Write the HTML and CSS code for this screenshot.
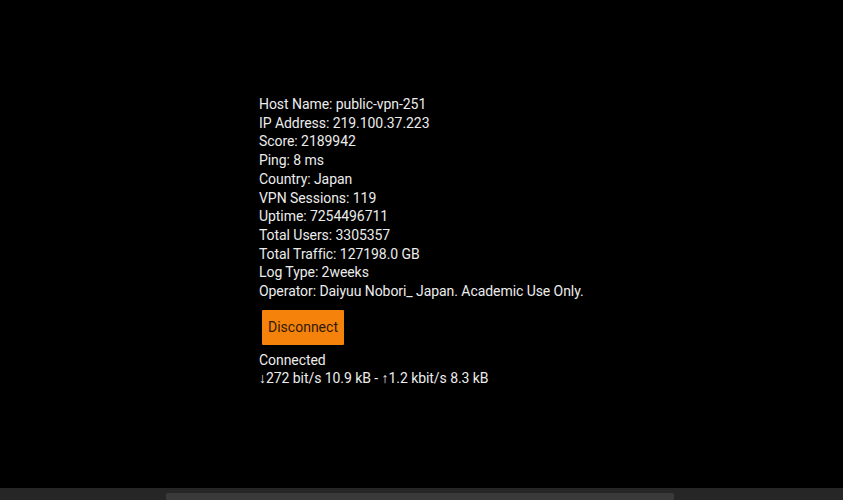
FILE: index.html
```html
<!DOCTYPE html>
<html lang="en">
<head>
    <meta charset="UTF-8">
    <meta name="viewport" content="width=device-width, initial-scale=1.0">
    <title>VPN Server</title>
    <link rel="stylesheet" href="styles.css">
</head>
<body>
<div class="screen">
    <div class="server-info">
        <div class="info-list">
            <div>Host Name: public-vpn-251</div>
            <div>IP Address: 219.100.37.223</div>
            <div>Score: 2189942</div>
            <div>Ping: 8 ms</div>
            <div>Country: Japan</div>
            <div>VPN Sessions: 119</div>
            <div>Uptime: 7254496711</div>
            <div>Total Users: 3305357</div>
            <div>Total Traffic: 127198.0 GB</div>
            <div>Log Type: 2weeks</div>
            <div>Operator: Daiyuu Nobori_ Japan. Academic Use Only.</div>
        </div>
        <button class="disconnect-btn" type="button">Disconnect</button>
        <div class="status">
            <div>Connected</div>
            <div>&darr;272 bit/s 10.9 kB - &uarr;1.2 kbit/s 8.3 kB</div>
        </div>
    </div>
</div>
<div class="nav-bar">
    <div class="nav-handle"></div>
</div>
</body>
</html>
```

FILE: styles.css
```css
body {
    margin: 0;
    padding: 0;
    background-color: #000000;
    color: #ececec;
    font-family: Roboto, "Noto Sans", sans-serif;
    font-size: 14px;
    height: 500px;
    display: flex;
    flex-direction: column;
    overflow: hidden;
}

.screen {
    flex: 1;
    display: flex;
    justify-content: center;
    padding-top: 95px;
}

.server-info {
    width: 325px;
    white-space: nowrap;
    letter-spacing: -0.06px;
}

.info-list,
.status {
    line-height: 18.7px;
}

/* orange flat button */
.disconnect-btn {
    display: block;
    margin: 9px 0 6px 3px;
    width: 82px;
    height: 35px;
    padding: 0;
    border: none;
    border-radius: 1px;
    background-color: #f5820b;
    color: #301a04;
    font-family: inherit;
    font-size: 14px;
}

.nav-bar {
    height: 12px;
    background-color: #262626;
}

.nav-handle {
    margin: 5px 0 0 166px;
    width: 508px;
    height: 7px;
    background-color: #3a3a3a;
    border-radius: 2px 2px 0 0;
}
```
